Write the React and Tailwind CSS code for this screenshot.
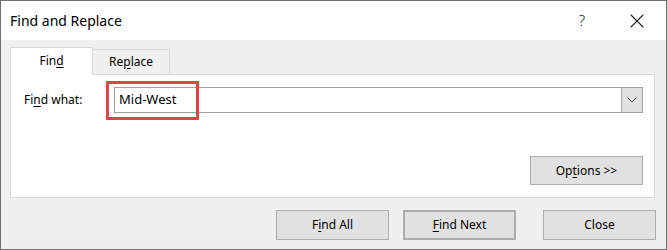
import { ChevronDown, X } from 'lucide-react';

const font = { fontFamily: '"Noto Sans", "Segoe UI", sans-serif' };

function Btn({ children, className = '' }) {
  return (
    <button
      className={`flex items-center justify-center bg-[#e1e1e1] border border-[#adadad] text-[12px] text-black ${className}`}
    >
      {children}
    </button>
  );
}

export default function App() {
  return (
    <div
      className="w-[667px] h-[250px] border border-[#707070] flex flex-col bg-[#f0f0f0]"
      style={font}
    >
      {/* title bar */}
      <div className="h-[39px] bg-white flex items-center pl-[9px] pr-[17px]">
        <span className="text-[14px] text-black flex-1">Find and Replace</span>
        <span className="text-[15px] text-[#222] mr-[40px] font-light">?</span>
        <X className="w-[24px] h-[24px] text-[#222]" strokeWidth={1.1} />
      </div>

      <div className="flex-1 pl-[9px] pt-[7px] flex flex-col">
        {/* tabs */}
        <div className="flex items-end h-[27px] relative z-10">
          <div className="w-[83px] h-[28px] bg-white border border-[#d9d9d9] border-b-0 flex items-center justify-center text-[12px] text-black -mb-px pb-[2px]">
            Fin<span className="underline underline-offset-2">d</span>
          </div>
          <div className="w-[77px] h-[25px] border border-[#d9d9d9] border-l-0 border-b-0 flex items-center justify-center text-[12px] text-black">
            Re<span className="underline underline-offset-2">p</span>lace
          </div>
        </div>

        {/* panel */}
        <div className="w-[645px] h-[124px] bg-white border border-[#d9d9d9] flex flex-col pt-[12px] pl-[13px] pr-[11px]">
          <div className="flex items-center h-[26px]">
            <span className="w-[90px] text-[12px] text-black">
              Fi<span className="underline underline-offset-2">n</span>d what:
            </span>
            <div className="relative flex-1 h-[26px] border border-[#a0a0a0] flex">
              <div className="flex-1 flex items-center pl-[4px] text-[13px] text-black">Mid-West</div>
              <div className="w-[21px] bg-[#e1e1e1] border-l border-[#adadad] flex items-center justify-center">
                <ChevronDown className="w-[16px] h-[16px] text-[#444]" strokeWidth={1.5} />
              </div>
              <div className="absolute left-[-9px] top-[-7px] w-[93px] h-[39px] border-[3px] border-[#ef4040]" />
            </div>
          </div>
          <div className="flex justify-end mt-[43px]">
            <Btn className="w-[113px] h-[29px]">
              Op<span className="underline underline-offset-2">t</span>ions &gt;&gt;
            </Btn>
          </div>
        </div>

        {/* bottom buttons */}
        <div className="flex mt-[12px] pl-[266px]">
          <Btn className="w-[113px] h-[30px]">
            F<span className="underline underline-offset-2">i</span>nd All
          </Btn>
          <Btn className="w-[113px] h-[30px] ml-[14px] border-2 border-[#0078d7]">
            <span className="underline underline-offset-2">F</span>ind Next
          </Btn>
          <Btn className="w-[113px] h-[30px] ml-[27px]">Close</Btn>
        </div>
      </div>
    </div>
  );
}
